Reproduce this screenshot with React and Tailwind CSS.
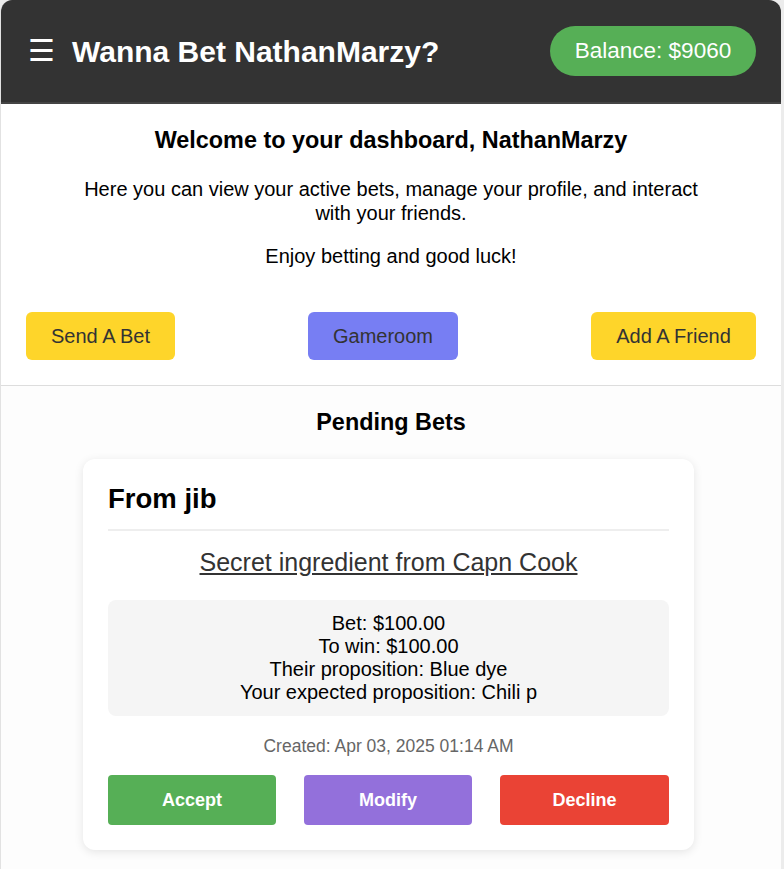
import React from 'react'

const PendingBet = ({ from, title, bet, toWin, theirs, yours, created }) => (
  <div className="ml-[82px] w-[611px] rounded-xl bg-white px-[25px] pt-[22px] pb-[25px] shadow-[0_2px_10px_rgba(0,0,0,0.1)]">
    <h3 className="border-b-2 border-[#eeeeee] pb-[12px] text-[27.5px] font-bold leading-[36px] text-black">From {from}</h3>
    <a href="#" className="mt-[17px] block text-center text-[25px] leading-[29px] text-[#333333] underline">
      {title}
    </a>
    <div className="mt-[23px] rounded-lg bg-[#f5f5f5] px-4 py-[12px] text-center text-[20px] leading-[23px] text-black">
      <div>Bet: {bet}</div>
      <div>To win: {toWin}</div>
      <div>Their proposition: {theirs}</div>
      <div>Your expected proposition: {yours}</div>
    </div>
    <p className="mt-[20px] text-center text-[17.5px] leading-[20px] text-[#666666]">Created: {created}</p>
    <div className="mt-[19px] flex justify-between">
      <button className="h-[50px] w-[168px] rounded bg-[#56af56] text-[18px] font-bold text-white">Accept</button>
      <button className="h-[50px] w-[168px] rounded bg-[#9370db] text-[18px] font-bold text-white">Modify</button>
      <button className="h-[50px] w-[169px] rounded bg-[#ea4335] text-[18px] font-bold text-white">Decline</button>
    </div>
  </div>
)

export default function App() {
  return (
    <div className="min-h-screen bg-[#ececec] font-['Liberation_Sans',Arial,sans-serif]">
      <div className="min-h-[869px] w-[781px] overflow-hidden rounded-t-xl border-l border-[#e2e2e2] bg-white">
        <header className="flex h-[104px] items-center justify-between border-b-2 border-[#444444] bg-[#333333] pl-[27px] pr-[25px]">
          <div className="flex items-center">
            <span className="text-[30px] leading-none text-white">☰</span>
            <h1 className="ml-[17px] text-[30px] font-bold text-white">Wanna Bet NathanMarzy?</h1>
          </div>
          <div className="flex h-[50px] w-[206px] items-center justify-center rounded-full bg-[#56af56] text-[22.5px] text-white">
            Balance: $9060
          </div>
        </header>

        <section className="pt-[23px] text-center text-black">
          <h2 className="text-[23.4px] font-bold leading-[27px]">Welcome to your dashboard, NathanMarzy</h2>
          <p className="mx-auto mt-[23px] w-[630px] text-[20px] leading-[24px]">
            Here you can view your active bets, manage your profile, and interact with your friends.
          </p>
          <p className="mt-[19px] text-[20px] leading-[24px]">Enjoy betting and good luck!</p>
          <div className="mt-[44px] flex justify-between px-[25px] pb-[25px]">
            <button className="h-[48px] w-[149px] rounded-md bg-[#fed52a] text-[20px] text-[#333333]">Send A Bet</button>
            <button className="h-[48px] w-[150px] rounded-md bg-[#777ef3] text-[20px] text-[#333333]">Gameroom</button>
            <button className="h-[48px] w-[165px] rounded-md bg-[#fed52a] text-[20px] text-[#333333]">Add A Friend</button>
          </div>
        </section>

        <section className="border-t border-[#dddddd] bg-[#fdfdfd] pt-[23px] pb-[20px]">
          <h2 className="mb-[23px] text-center text-[23.4px] font-bold leading-[27px] text-black">Pending Bets</h2>
          <PendingBet
            from="jib"
            title="Secret ingredient from Capn Cook"
            bet="$100.00"
            toWin="$100.00"
            theirs="Blue dye"
            yours="Chili p"
            created="Apr 03, 2025 01:14 AM"
          />
        </section>
      </div>
    </div>
  )
}
